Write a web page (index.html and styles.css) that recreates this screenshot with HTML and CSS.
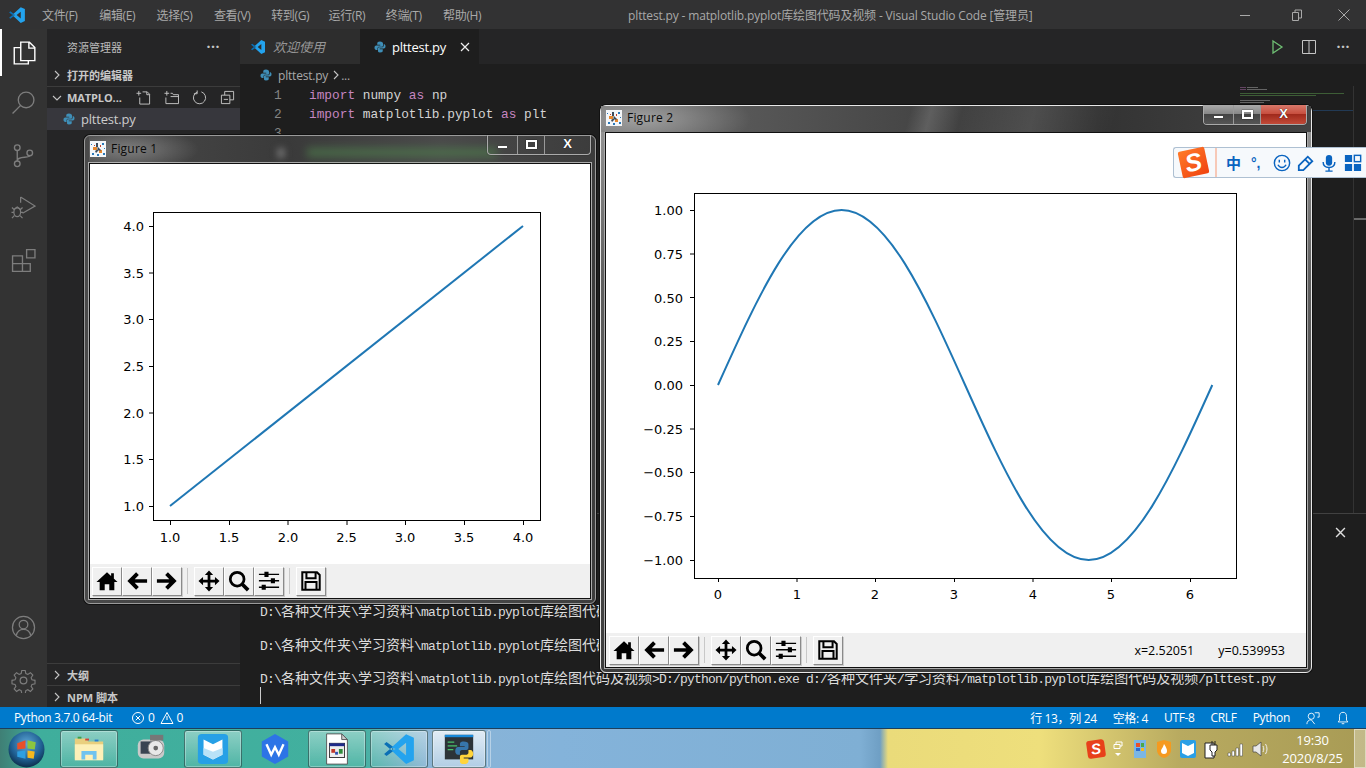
FILE: index.html
```html
<!DOCTYPE html>
<html lang="zh-CN">
<head>
<meta charset="utf-8">
<title>plttest.py - matplotlib.pyplot库绘图代码及视频 - Visual Studio Code [管理员]</title>
<link rel="stylesheet" href="styles.css">
</head>
<body>
<svg class="defs" width="0" height="0" aria-hidden="true">
  <defs>
    <radialGradient id="orb-g" cx="50%" cy="35%" r="65%"><stop offset="0" stop-color="#5fa8d8"/><stop offset=".65" stop-color="#1f5f92"/><stop offset="1" stop-color="#0c2f4c"/></radialGradient>
  </defs>
  <symbol id="py" viewBox="0 0 24 24">
    <path fill="#3f8fb8" d="M12 1C7 1 6.500 3 6.500 5v2.500H12.500V9H4.500C2 9 1 11 1 13.500S2.500 18 4.500 18H7v-3c0-2.500 1.500-3.500 3.500-3.500h5c1.500 0 2.500-1 2.500-2.500V5c0-2-2-4-6-4z"/>
    <path fill="#3f8fb8" d="M12 23c5 0 5.500-2 5.500-4v-2.500H11.500V15h8c2.500 0 3.500-2 3.500-4.500S21.500 6 19.500 6v3c0 2.500-1.500 3.500-3.500 3.500h-5.500C9 12.500 8 13.500 8 15v4c0 2 0 4 4 4z"/>
  </symbol>
  <symbol id="vsc" viewBox="0 0 24 24">
    <path fill="#0a6fb5" d="M1.500 8.500 3.200 7 8.500 11l-1.800 1.800zM1.500 15.500 3.200 17l5.300-4-1.800-1.800z"/>
    <path fill="#23a3ee" d="M17 1.500 22.500 4v16L17 22.500 6.700 13l3-1-3-1zM17 7.500 11.500 12l5.500 4.500z" fill-rule="evenodd"/>
  </symbol>
  <symbol id="mpl" viewBox="0 0 16 16">
    <rect width="16" height="16" fill="#f4f6f8"/>
    <path fill="#e5862c" d="M3 6h4v3H3zM9 9h3v3H9z"/>
    <path fill="#3a4a5a" d="M6 2h2v4H6zM8 6l3 3-1 1-3-3zM5 10l3-2 1 1-3 3z"/>
    <path fill="#2a78b8" d="M12 2h2v2h-2zM2 12h2v2H2zM7 13h2v2H7zM13 12h2v2h-2zM1 3h1v1H1zM14 7h1v1h-1z"/>
    <path fill="#c8402a" d="M10 4h1v2h-1zM4 4h1v1H4z"/>
  </symbol>
  <symbol id="t-home" viewBox="0 0 24 24"><path d="M12 2.500 23.500 13H20v9h-5.500v-6.500h-5V22H4v-9H.5zM16.500 3.500h3v6l-3-2.800z"/></symbol>
  <symbol id="t-back" viewBox="0 0 24 24"><path d="M1.500 12 11 2.500l3 3L9.500 10H23v4H9.500l4.500 4.500-3 3z"/></symbol>
  <symbol id="t-fwd" viewBox="0 0 24 24"><path d="M22.500 12 13 2.500l-3 3 4.500 4.500H1v4h13.500L10 18.500l3 3z"/></symbol>
  <symbol id="t-move" viewBox="0 0 24 24"><path d="M12 .5l4.500 5h-3v5h5v-3l5 4.500-5 4.500v-3h-5v5h3L12 23.500l-4.500-5h3v-5h-5v3L.5 12l5-4.500v3h5v-5h-3z"/></symbol>
  <symbol id="t-zoom" viewBox="0 0 24 24"><circle cx="10" cy="10" r="7.500" fill="none" stroke="#000" stroke-width="3"/><path d="M15 15l7 7" stroke="#000" stroke-width="4"/></symbol>
  <symbol id="t-conf" viewBox="0 0 24 24"><path d="M1 4h22v1.500H1zM1 11h22v1.500H1zM1 18h22v1.500H1z"/><path d="M7 2h4.500v5.500H7zM14 9h4.500v5.500H14zM4 16h4.500v5.500H4z"/></symbol>
  <symbol id="t-save" viewBox="0 0 24 24"><path fill="none" stroke="#000" stroke-width="2.200" d="M2.500 2.500h16l3 3v16h-19zM7 2.500v6.500h10V2.500M6 21.500v-8.500h12v8.500"/></symbol>
</svg>

<div class="desktop">
  <div class="vscode">
    <header class="titlebar">
      <svg class="tb-logo"><use href="#vsc"/></svg>
      <nav class="menu">
        <span>文件(F)</span><span>编辑(E)</span><span>选择(S)</span><span>查看(V)</span><span>转到(G)</span><span>运行(R)</span><span>终端(T)</span><span>帮助(H)</span>
      </nav>
      <div class="wintitle">plttest.py - matplotlib.pyplot库绘图代码及视频 - Visual Studio Code [管理员]</div>
      <div class="winbtns">
        <svg viewBox="0 0 14 14"><path d="M2 7.500h10"/></svg>
        <svg viewBox="0 0 14 14"><path d="M2.500 4.500h6v8h-6zM5 4.500V2h6.500v8h-3"/></svg>
        <svg viewBox="0 0 14 14"><path d="M1.500 1.500l11 11M12.500 1.500l-11 11"/></svg>
      </div>
    </header>

    <div class="workbench">
      <aside class="activity">
        <div class="act-item act-on"><svg viewBox="0 0 24 24" class="white"><path d="M9 2h8l5 5v12H9zM16.500 2v5.500H22M9 7H3v15h13v-3"/></svg></div>
        <div class="act-item"><svg viewBox="0 0 24 24"><circle cx="14.500" cy="9.500" r="7.500"/><path d="M9 15l-7.500 7.500"/></svg></div>
        <div class="act-item"><svg viewBox="0 0 24 24"><circle cx="6" cy="4.500" r="2.700"/><circle cx="6" cy="20" r="2.700"/><circle cx="18" cy="9.500" r="2.700"/><path d="M6 7.200v10M6 17c0-5 12-2 12-5"/></svg></div>
        <div class="act-item"><svg viewBox="0 0 26 26"><path d="M10 2l15 9.500L12 19M10 2v6"/><ellipse cx="6.500" cy="18" rx="3.500" ry="4.500"/><path d="M3.500 14.500l3-2 3 2M1 13l2.500 2.500M12 13l-2.500 2.500M.5 18H3M10 18h2.500M1 24l2.500-2.500M12 24l-2.500-2.500"/></svg></div>
        <div class="act-item"><svg viewBox="0 0 24 24"><path d="M1.500 7.500h9.500v15H1.500zM1.500 15h17v7.500H11M11 7.500V15M15 1.500h8v8h-8z"/></svg></div>
        <div class="act-spacer"></div>
        <div class="act-item"><svg viewBox="0 0 26 26"><circle cx="13" cy="13" r="11.500"/><circle cx="13" cy="10" r="4.500"/><path d="M5.500 21.500c1-5 4-6.500 7.500-6.500s6.500 1.500 7.500 6.500"/></svg></div>
        <div class="act-item act-gear"><svg viewBox="0 0 26 26"><circle cx="13" cy="13" r="3.500"/><path d="M11 1.500h4l.7 3.500 2.300 1 3-2 2.800 2.800-2 3 1 2.300 3.500.7v4l-3.500.7-1 2.300 2 3-2.800 2.800-3-2-2.300 1-.7 3.500h-4l-.7-3.500-2.300-1-3 2-2.800-2.800 2-3-1-2.300-3.500-.7v-4l3.500-.7 1-2.300-2-3L5 4l3 2 2.300-1z" transform="translate(1.300 1.300) scale(.9)"/></svg></div>
      </aside>

      <aside class="sidebar">
        <div class="side-head"><span>资源管理器</span><span class="dots">···</span></div>
        <div class="side-row side-bold"><svg class="chev" viewBox="0 0 10 10"><path d="M3 1l4 4-4 4"/></svg>打开的编辑器</div>
        <div class="side-row side-bold side-line">
          <svg class="chev" viewBox="0 0 10 10"><path d="M1 3l4 4 4-4"/></svg>
          <span class="proj">MATPLO...</span>
          <span class="proj-tools">
            <svg viewBox="0 0 16 16"><path d="M3 1v5M.5 3.500h5M7 2h5l2.500 2.500V15H4V8M11.500 2v3h3"/></svg>
            <svg viewBox="0 0 16 16"><path d="M3 1v5M.5 3.500h5M7 3.500h2L10 5h5.500v9.500H2V8M7 7h8.500"/></svg>
            <svg viewBox="0 0 16 16"><path d="M5.500 2.200A6.500 6.500 0 1 0 10 2M5.500 .5v3.500H2"/></svg>
            <svg viewBox="0 0 16 16"><path d="M1.500 5.500h9v9h-9zM5 5.500V1.500h9.500v9h-4M4 10h4.500"/></svg>
          </span>
        </div>
        <div class="side-file"><svg class="py-ico"><use href="#py"/></svg>plttest.py</div>
        <div class="side-spacer"></div>
        <div class="side-row side-bold side-line"><svg class="chev" viewBox="0 0 10 10"><path d="M3 1l4 4-4 4"/></svg>大纲</div>
        <div class="side-row side-bold side-line"><svg class="chev" viewBox="0 0 10 10"><path d="M3 1l4 4-4 4"/></svg>NPM 脚本</div>
      </aside>

      <main class="editor-area">
        <div class="tabs">
          <div class="tab tab-off"><svg class="tab-ico"><use href="#vsc"/></svg><em>欢迎使用</em></div>
          <div class="tab tab-on"><svg class="py-ico"><use href="#py"/></svg><span>plttest.py</span><svg class="tab-x" viewBox="0 0 10 10"><path d="M1 1l8 8M9 1l-8 8"/></svg></div>
          <div class="tab-actions">
            <svg viewBox="0 0 16 16" class="run"><path d="M4 2l9 6-9 6z"/></svg>
            <svg viewBox="0 0 16 16"><path d="M1.500 1.500h13v13h-13zM8 1.500v13"/></svg>
            <span class="dots dots-r">···</span>
          </div>
        </div>
        <div class="crumbs"><svg class="py-ico"><use href="#py"/></svg>plttest.py<svg class="chev" viewBox="0 0 10 10"><path d="M3 1l4 4-4 4"/></svg>...</div>
        <div class="editor">
          <div class="line"><span class="ln">1</span><code><i>import</i> numpy <i>as</i> np</code></div>
          <div class="line"><span class="ln">2</span><code><i>import</i> matplotlib.pyplot <i>as</i> plt</code></div>
          <div class="line"><span class="ln">3</span></div>
          <svg class="minimap" viewBox="0 0 104 20">
            <path class="mm-p" d="M0 1h6v1H0zM0 3h6v1H0z"/><path class="mm-w" d="M7 1h11v1H7zM7 3h20v1H7zM0 14h30v1H0zM0 16h24v1H0z"/>
            <path class="mm-g" d="M0 7h104v1H0zM0 9h76v1H0z"/>
          </svg>
          <div class="mini-line"></div>
          <div class="scroll-tick"></div>
        </div>
        <div class="panel">
          <svg class="panel-x" viewBox="0 0 10 10"><path d="M1 1l8 8M9 1l-8 8"/></svg>
          <div class="term">
            <div><b>D:\</b><s>各种文件夹</s><b>\</b><s>学习资料</s><b>\matplotlib.pyplot</b><s>库绘图代码及视频</s><b>&gt;</b></div>
            <div class="blank"></div>
            <div><b>D:\</b><s>各种文件夹</s><b>\</b><s>学习资料</s><b>\matplotlib.pyplot</b><s>库绘图代码及视频</s><b>&gt;</b></div>
            <div class="blank"></div>
            <div><b>D:\</b><s>各种文件夹</s><b>\</b><s>学习资料</s><b>\matplotlib.pyplot</b><s>库绘图代码及视频</s><b>&gt;D:/python/python.exe d:/</b><s>各种文件夹</s><b>/</b><s>学习资料</s><b>/matplotlib.pyplot</b><s>库绘图代码及视频</s><b>/plttest.py</b></div>
            <div class="blank"><span class="cursor"></span></div>
          </div>
        </div>
      </main>
    </div>

    <footer class="status">
      <span class="st-py">Python 3.7.0 64-bit</span>
      <span class="st-err">
        <svg viewBox="0 0 14 14"><circle cx="7" cy="7" r="5.500"/><path d="M4.800 4.800l4.400 4.400M9.200 4.800l-4.400 4.400"/></svg>0
        <svg viewBox="0 0 14 14"><path d="M7 1.500l6 11H1z"/><path d="M7 5v4"/></svg>0
      </span>
      <span class="st-right">
        <span>行 13，列 24</span><span>空格: 4</span><span>UTF-8</span><span>CRLF</span><span>Python</span>
        <svg viewBox="0 0 16 16"><circle cx="6" cy="6" r="3.500"/><path d="M1 15c0-3 2-5 5-5l4 5M10 2h5v5h-2"/></svg>
        <svg viewBox="0 0 16 16"><path d="M8 1.500c-3 0-4 2-4 5v4l-1.500 2h11L12 10.500v-4c0-3-1-5-4-5zM6.500 14.500h3"/></svg>
      </span>
    </footer>
  </div>

  <div class="taskbar">
    <div class="orb"><svg viewBox="0 0 36 36"><circle cx="18" cy="18" r="17.500" fill="url(#orb-g)"/><path fill="#e8502a" d="M9 12l8-3v8l-8 1z"/><path fill="#8cc63f" d="M19 9l8 2-1 7-7-1z"/><path fill="#2e9fe0" d="M9 20l8-1v8l-8-2z"/><path fill="#f5b81f" d="M19 19l7 1-1 7-6-1z"/></svg></div>
    <div class="task task-framed"><svg viewBox="0 0 36 36"><path fill="#e9cf7e" d="M3 7h12l2 3h16v19H3z"/><path fill="#fdf0b8" d="M3 13h30v17H3z"/><path fill="#6fc3ef" d="M10 29v-9h16v9h-4v-5h-8v5z"/><path fill="#3da04b" d="M6 5h4v2H6z"/><path fill="#d0443a" d="M14 7h4v2h-4z"/><path fill="#2c7fd0" d="M24 8h4v2h-4z"/></svg></div>
    <div class="task"><svg viewBox="0 0 36 36"><rect x="4" y="8" width="28" height="20" rx="6" fill="#c9c9c9"/><rect x="7" y="10" width="13" height="13" fill="#394452"/><circle cx="23" cy="17" r="8" fill="#e8e8e8" stroke="#888"/><circle cx="23" cy="17" r="2.500" fill="#666"/><rect x="17" y="3" width="14" height="6" fill="#777"/></svg></div>
    <div class="task task-framed"><svg viewBox="0 0 36 36"><rect x="2" y="2" width="32" height="32" rx="4" fill="#26a0e6"/><path fill="#fff" d="M8 8l10 5v16L8 24zM28 8l-10 5v16l10-5z"/><path fill="#b9e2f7" d="M8 17l10 4v8L8 24zM28 17l-10 4v8l10-5z"/></svg></div>
    <div class="task"><svg viewBox="0 0 36 36"><path fill="#2d74e6" d="M18 2l14 8v16l-14 8-14-8V10z"/><path fill="none" stroke="#fff" stroke-width="2.500" d="M9 13l5 11 4-8 4 8 5-11"/></svg></div>
    <div class="task task-framed"><svg viewBox="0 0 36 36"><path fill="#fff" stroke="#555" d="M7 2h16l6 6v26H7z"/><path fill="#ccc" stroke="#555" d="M23 2v6h6z"/><rect x="10" y="12" width="16" height="15" fill="#eee" stroke="#333"/><rect x="10" y="12" width="16" height="3" fill="#1e2a8a"/><path fill="#c0392b" d="M12 18h4v4h-4z"/><path fill="#2e8b3a" d="M20 18h4v5h-4z"/><path fill="#2f4fb0" d="M16 21h3v3h-3z"/></svg></div>
    <div class="task task-framed task-vsc"><svg><use href="#vsc"/></svg></div>
    <div class="task task-framed task-active"><svg viewBox="0 0 36 36"><rect x="3" y="3" width="30" height="26" fill="#2c3338"/><rect x="3" y="3" width="30" height="2.500" fill="#1788d8"/><path fill="#48c16a" d="M6 10h7v1.300H6zM6 14h10v1.300H6zM6 18h6v1.300H6z"/><path fill="#3776ab" d="M20 10c-4 0-4 2-4 3v2h5v1h-7c-2 0-3 2-3 4s1 4 3 4h2v-3c0-1 1-2 2-2h5c1 0 2-1 2-2v-4c0-2-2-3-5-3z" transform="translate(3 0)"/><path fill="#ffd43b" d="M23 34c4 0 5-2 5-3v-3h-5v-1h7c2 0 3-2 3-4s-1-4-3-4h-2v3c0 1-1 2-2 2h-5c-1 0-2 1-2 2v5c0 2 1 3 4 3z"/></svg></div>
    <div class="task-sliver"></div>
    <div class="task-space"></div>
    <div class="tray">
      <span class="tray-s">S</span>
      <svg class="tray-up" viewBox="0 0 14 20"><path fill="none" stroke="#fff" d="M3 5.500h6v4H3zM5 5.500V3h6v4H9"/><path fill="#fff" d="M4 14h6l-3 3z"/></svg>
      <svg viewBox="0 0 18 20"><rect x="3" y="1" width="12" height="18" fill="#7ab6e4"/><path fill="#e8502a" d="M5 4h4v4H5z"/><path fill="#4aa84a" d="M10 4h3v4h-3z"/><path fill="#f5b81f" d="M10 9h3v3h-3z"/><path fill="#2a6ad0" d="M5 9h4v3H5z"/></svg>
      <svg viewBox="0 0 18 20"><path fill="#f59a1f" d="M2 3l7-2 7 2v8c0 4-3 7-7 8-4-1-7-4-7-8z"/><path fill="#fff" d="M9 5c2 3 3 5 3 7 0 2-1 3-3 3s-3-1-3-3c0-2 2-3 3-7z"/></svg>
      <svg viewBox="0 0 18 20"><rect x="1" y="1" width="16" height="18" rx="2" fill="#2a9fe6"/><path fill="#fff" d="M3 4l6 3v10l-6-3zM15 4L9 7v10l6-3z"/></svg>
      <svg viewBox="0 0 18 20"><path fill="#fff" stroke="#222" d="M2 4h9v15H2z"/><path fill="#fff" stroke="#222" d="M7 6h7v5l-2 2v4h-3v-4l-2-2zM9 2v4M12 2v4"/></svg>
      <svg viewBox="0 0 18 20"><path fill="#fff" stroke="#444" stroke-width=".5" d="M1 14h2.500v3H1zM5 12h2.500v5H5zM9 9h2.500v8H9zM13 5h2.500v12H13z"/></svg>
      <svg viewBox="0 0 18 20"><path fill="#e8e8e8" stroke="#444" stroke-width=".7" d="M2 7h3l5-4v14l-5-4H2z"/><path fill="none" stroke="#eee" d="M12 7c1 2 1 4 0 6M14.500 5c2 3 2 7 0 10"/></svg>
      <div class="clock"><span>19:30</span><span>2020/8/25</span></div>
    </div>
    <div class="show-desktop"></div>
  </div>

  <section class="figure fig1">
    <div class="glass-blur"></div>
    <div class="glass-four"></div>
    <div class="fig-title"><svg class="fig-ico"><use href="#mpl"/></svg><span class="fig-name">Figure 1</span>
      <div class="aero-btns">
        <div class="ab ab-min"><i></i></div><div class="ab ab-max"><i></i></div><div class="ab ab-close">X</div>
      </div>
    </div>
    <div class="client">
      <svg class="plot" viewBox="90 164 500 400">
        <rect class="axes" x="153.500" y="212.500" width="387" height="308"/>
        <path class="tick" d="M170.500 521v4M229.500 521v4M288 521v4M347 521v4M405.500 521v4M464.500 521v4M523.500 521v4M153 506.500h-4M153 459.500h-4M153 413h-4M153 366.500h-4M153 319.500h-4M153 273h-4M153 226.500h-4"/>
        <path class="curve" d="M170 506L523 226"/>
        <g class="xl"><text x="170" y="542">1.0</text><text x="229" y="542">1.5</text><text x="288" y="542">2.0</text><text x="346.500" y="542">2.5</text><text x="405" y="542">3.0</text><text x="464" y="542">3.5</text><text x="523" y="542">4.0</text></g>
        <g class="yl"><text x="144" y="511">1.0</text><text x="144" y="464">1.5</text><text x="144" y="418">2.0</text><text x="144" y="371">2.5</text><text x="144" y="324">3.0</text><text x="144" y="278">3.5</text><text x="144" y="231">4.0</text></g>
      </svg>
      <div class="toolbar">
        <button class="tbtn"><svg><use href="#t-home"/></svg></button><button class="tbtn"><svg><use href="#t-back"/></svg></button><button class="tbtn"><svg><use href="#t-fwd"/></svg></button>
        <span class="sep"></span>
        <button class="tbtn"><svg><use href="#t-move"/></svg></button><button class="tbtn"><svg><use href="#t-zoom"/></svg></button><button class="tbtn"><svg><use href="#t-conf"/></svg></button>
        <span class="sep"></span>
        <button class="tbtn"><svg><use href="#t-save"/></svg></button>
      </div>
    </div>
  </section>

  <section class="figure fig2">
    <div class="fig-title"><svg class="fig-ico"><use href="#mpl"/></svg><span class="fig-name">Figure 2</span>
      <div class="aero-btns">
        <div class="ab ab-min"><i></i></div><div class="ab ab-max"><i></i></div><div class="ab ab-close">X</div>
      </div>
    </div>
    <div class="client">
      <svg class="plot" viewBox="606 133 700 500">
        <rect class="axes" x="694.500" y="193.500" width="542" height="385"/>
        <path class="tick" d="M718.500 578v4M797 578v4M875.500 578v4M954.500 578v4M1033 578v4M1111.500 578v4M1190.500 578v4M694 210.500h-4M694 254h-4M694 297.500h-4M694 341.500h-4M694 385.500h-4M694 429h-4M694 472.500h-4M694 516.500h-4M694 560.500h-4"/>
        <path class="curve" d="M718 385C758.300 295.400 796.900 210 841.600 210C886.200 210 924.900 295.400 965.100 385C1005.400 474.600 1044.100 560 1088.700 560C1133.300 560 1172 474.600 1212.300 385"/>
        <g class="xl"><text x="718" y="599">0</text><text x="797" y="599">1</text><text x="875" y="599">2</text><text x="954" y="599">3</text><text x="1033" y="599">4</text><text x="1111" y="599">5</text><text x="1190" y="599">6</text></g>
        <g class="yl"><text x="683" y="215">1.00</text><text x="683" y="259">0.75</text><text x="683" y="303">0.50</text><text x="683" y="346">0.25</text><text x="683" y="390">0.00</text><text x="683" y="434">−0.25</text><text x="683" y="477">−0.50</text><text x="683" y="521">−0.75</text><text x="683" y="565">−1.00</text></g>
      </svg>
      <div class="toolbar">
        <button class="tbtn"><svg><use href="#t-home"/></svg></button><button class="tbtn"><svg><use href="#t-back"/></svg></button><button class="tbtn"><svg><use href="#t-fwd"/></svg></button>
        <span class="sep"></span>
        <button class="tbtn"><svg><use href="#t-move"/></svg></button><button class="tbtn"><svg><use href="#t-zoom"/></svg></button><button class="tbtn"><svg><use href="#t-conf"/></svg></button>
        <span class="sep"></span>
        <button class="tbtn"><svg><use href="#t-save"/></svg></button>
        <span class="coords"><span>x=2.52051</span><span>y=0.539953</span></span>
      </div>
    </div>
  </section>

  <div class="sogou">
    <div class="sg-logo"><span>S</span></div>
    <div class="sg-div"></div>
    <span class="sg-zh">中</span>
    <span class="sg-punct">°,</span>
    <svg viewBox="0 0 20 20"><circle cx="10" cy="10" r="8.500"/><path d="M7 6.500v3M13 6.500v3M5.500 12c2 4 7 4 9 0"/></svg>
    <svg viewBox="0 0 20 20"><path d="M2 13L12 3l5 5-10 10H2zM9 6l5 5" class="sg-pen"/></svg>
    <svg viewBox="0 0 20 20"><rect x="6.500" y="1" width="7" height="12" rx="3.500" class="sg-fill"/><path d="M3.500 9c0 4 3 6 6.500 6s6.500-2 6.500-6M10 15v4M6 19h8"/></svg>
    <svg viewBox="0 0 20 20"><path class="sg-fill" d="M1 1h8v8H1zM1 11h8v8H1zM11 11h8v8h-8z"/><rect x="11.500" y="1.500" width="7" height="7"/></svg>
  </div>
</div>
</body>
</html>
```
FILE: styles.css
```css
* { box-sizing: border-box; }
html, body { margin: 0; height: 100%; overflow: hidden; background: #000; }
body { font: 12px "Open Sans", "Noto Sans CJK SC", sans-serif; color: #ccc; }
.defs { position: absolute; }
svg { display: block; }

.desktop { position: relative; width: 1366px; height: 768px; display: flex; flex-direction: column; overflow: hidden; }
.vscode { height: 728px; display: flex; flex-direction: column; }

/* title bar */
.titlebar { height: 29px; background: #323233; display: flex; align-items: center; position: relative; color: #a9a9a9; flex: none; }
.tb-logo { width: 18px; height: 18px; margin: 0 16px 0 8px; }
.menu { display: flex; gap: 15.300px; }
.menu span { width: 42px; white-space: nowrap; letter-spacing: -.35px; }
.wintitle { margin-left: 143px; white-space: nowrap; letter-spacing: -.16px; }
.winbtns { margin-left: auto; display: flex; gap: 33px; padding-right: 15px; }
.winbtns svg { width: 14px; height: 14px; fill: none; stroke: #a9a9a9; }
.winbtns svg:first-child { margin-right: 5px; }

.workbench { flex: 1; display: flex; min-height: 0; }

/* activity bar */
.activity { width: 47px; background: #333; display: flex; flex-direction: column; flex: none; }
.act-item { height: 52.700px; display: flex; align-items: center; justify-content: center; flex: none; }
.act-item svg { width: 25px; height: 25px; fill: none; stroke: #7d7d7d; stroke-width: 1.300; }
.act-item svg.white { stroke: #fff; width: 26px; height: 26px; }
.act-on { height: 47px; border-left: 2px solid #fff; padding-right: 2px; }
.act-spacer { flex: 1; }

/* sidebar */
.sidebar { width: 193px; background: #252526; display: flex; flex-direction: column; flex: none; }
.side-head { height: 35px; display: flex; justify-content: space-between; align-items: center; padding: 0 20px; color: #bbb; font-size: 11px; flex: none; }
.dots { font-size: 14px; font-weight: 700; letter-spacing: .5px; color: #c5c5c5; }
.side-row { height: 22px; display: flex; align-items: center; color: #c8c8c8; font-size: 11px; flex: none; }
.side-bold { font-weight: 700; }
.side-line { border-top: 1px solid #3c3c3c; }
.chev { width: 10px; height: 10px; margin: 0 5px 0 5px; fill: none; stroke: #c5c5c5; stroke-width: 1.100; flex: none; }
.proj { width: 63px; white-space: nowrap; letter-spacing: -.1px; }
.proj-tools { display: flex; gap: 13px; margin-left: 6px; }
.proj-tools svg { width: 15px; height: 15px; fill: none; stroke: #c5c5c5; }
.side-file { height: 22px; background: #37373d; display: flex; align-items: center; padding-left: 16px; font-size: 13px; color: #ccc; letter-spacing: -.2px; flex: none; }
.py-ico { width: 12px; height: 12px; margin-right: 6px; flex: none; }
.side-spacer { flex: 1; }

/* editor */
.editor-area { flex: 1; display: flex; flex-direction: column; min-width: 0; background: #1e1e1e; }
.tabs { height: 35px; background: #252526; display: flex; flex: none; }
.tab { display: flex; align-items: center; font-size: 13px; flex: none; }
.tab-off { width: 120px; background: #2d2d2d; padding-left: 10px; color: #969696; }
.tab-ico { width: 16px; height: 16px; margin-right: 7px; }
.tab-on { width: 119px; background: #1e1e1e; padding-left: 14px; color: #fff; letter-spacing: -.25px; }
.tab-x { width: 10px; height: 10px; margin-left: 14px; fill: none; stroke: #eee; stroke-width: 1.200; }
.tab-actions { margin-left: auto; display: flex; align-items: center; gap: 16px; padding-right: 16px; }
.tab-actions svg { width: 16px; height: 16px; fill: none; stroke: #c5c5c5; }
.tab-actions svg.run { stroke: #6fbf73; stroke-width: 1.300; }
.dots-r { margin-left: 4px; }
.crumbs { height: 22px; display: flex; align-items: center; padding-left: 20px; color: #a9a9a9; letter-spacing: -.2px; flex: none; }
.crumbs .chev { margin: 0 0 0 3px; }
.editor { flex: 1; position: relative; min-height: 0; }
.line { height: 19px; display: flex; align-items: center; font: 12.800px/19px "Liberation Mono", "Noto Sans CJK SC", monospace; }
.ln { width: 69px; padding-left: 34px; color: #858585; }
.line code { font: inherit; color: #d4d4d4; }
.line i { font-style: normal; color: #c586c0; }
.minimap { position: absolute; left: 1000px; top: 0; width: 104px; height: 20px; opacity: .65; }
.mm-p { fill: #8a5a88; } .mm-w { fill: #8a8a8a; } .mm-g { fill: #4f7f43; }
.mini-line { position: absolute; left: 1000px; right: 12px; top: 24px; height: 1px; background: #223a55; }
.editor::after { content: ""; position: absolute; top: 0; bottom: 0; right: 12px; width: 1px; background: #333; }
.scroll-tick { position: absolute; right: 0; top: 132px; width: 12px; height: 2px; background: #6a6a6a; }

/* panel */
.panel { height: 194px; border-top: 1px solid #414141; position: relative; display: flex; flex-direction: column; justify-content: flex-end; flex: none; }
.panel-x { position: absolute; right: 20px; top: 13px; width: 11px; height: 11px; fill: none; stroke: #ddd; stroke-width: 1.300; }
.term { padding: 0 0 3px 20px; font: 400 13px/16.800px "Liberation Mono", monospace; color: #dcdcdc; white-space: nowrap; }
.term > div { height: 16.800px; }
.term b { font-weight: 400; letter-spacing: -.8px; }
.term s { text-decoration: none; font: 400 14px/16.800px "Noto Sans CJK SC", sans-serif; }
.cursor { display: block; width: 1px; height: 17px; margin-top: 1px; background: #ccc; }

/* status bar */
.status { height: 21px; background: #007acc; display: flex; align-items: center; padding: 0 16px 0 14px; color: #fff; flex: none; white-space: nowrap; letter-spacing: -.35px; }
.status svg { width: 14px; height: 14px; fill: none; stroke: #fff; }
.st-py { width: 117px; }
.st-err { display: flex; align-items: center; gap: 3px; }
.st-err svg + svg { margin-left: 2px; }
.st-right { margin-left: auto; display: flex; align-items: center; gap: 16px; }

/* taskbar */
.taskbar { height: 40px; flex: none; display: flex; align-items: stretch; padding: 1px 0 0 8px; border-top: 1px solid #1d3f5c; background: linear-gradient(90deg, #3f7f75 0, #3fae9c 40px, #42b09f 360px, #8ab4d6 430px, #84b3da 560px, #7fafd4 860px, #6f9fc4 880px, #eadb7a 888px, #eedf7c 1040px, #b8aa60 1180px, #a89b55 1366px); }
.orb { width: 38px; margin-right: 14px; display: flex; align-items: center; }
.orb svg { width: 37px; height: 37px; }
.task { width: 58px; margin-right: 4px; flex: none; display: flex; align-items: center; justify-content: center; }
.task svg { width: 34px; height: 34px; }
.task-framed { border: 1px solid rgba(30, 60, 60, .6); border-radius: 3px; box-shadow: inset 0 0 0 1px rgba(255, 255, 255, .3); background: linear-gradient(180deg, rgba(255, 255, 255, .4), rgba(255, 255, 255, .08)); }
.task-active { width: 54px; background: linear-gradient(180deg, rgba(255, 255, 255, .75), rgba(255, 255, 255, .35)); }
.task-sliver { width: 4px; margin-left: -3px; border: 1px solid rgba(255, 255, 255, .4); border-radius: 2px; }
.task-space { flex: 1; }
.tray { display: flex; align-items: center; gap: 6px; padding-right: 5px; }
.tray > svg { width: 18px; height: 20px; }
.tray .tray-up { width: 14px; }
.tray-s { width: 18px; height: 18px; background: #e8401a; color: #fff; border-radius: 3px; font: italic 700 15px/18px "Liberation Sans", sans-serif; text-align: center; transform: rotate(-8deg); }
.clock { width: 73px; margin-left: 1px; display: flex; flex-direction: column; align-items: center; color: #fff; font-size: 13px; line-height: 18px; letter-spacing: -.1px; }
.show-desktop { width: 12px; background: rgba(255, 255, 255, .3); border: 1px solid rgba(255, 255, 255, .45); flex: none; margin-top: -1px; }

/* figure windows */
.figure { position: absolute; display: flex; flex-direction: column; padding: 0 4px 4px; border-radius: 6px; box-shadow: 0 0 0 1px #111; }
.fig1 { left: 84px; top: 135px; width: 512px; height: 469px; border: 1px solid #9a9a9a; background: linear-gradient(90deg, #4a4a4a, #3a3a3a 40%, #4a4a4a 70%, #3c3c3c); }
.fig2 { left: 600px; top: 105px; width: 712px; height: 568px; border: 1px solid #e8e8e8; background: linear-gradient(180deg, #9a9a9a 0, #606060 30%, #3c3c3c 100%); }
.fig-title { height: 27px; display: flex; align-items: center; position: relative; flex: none; padding-bottom: 2px; background: radial-gradient(ellipse 70px 22px at 40px 50%, rgba(255, 255, 255, .3), transparent); }
.fig2 .fig-title { height: 26px; padding-bottom: 3px; margin: 0 -4px; padding-left: 4px; padding-right: 4px; background: radial-gradient(ellipse 110px 34px at 40px 50%, rgba(255, 255, 255, .4), transparent), linear-gradient(105deg, transparent 300px, rgba(255, 255, 255, .14) 320px, transparent 350px, rgba(255, 255, 255, .1) 420px, transparent 500px), linear-gradient(90deg, #666, #333 70%, #444); }
.fig-ico { width: 16px; height: 16px; margin-left: 1px; flex: none; }
.fig-name { color: #0a0a0a; margin-left: 5px; font-size: 12px; letter-spacing: .2px; }
.glass-blur { position: absolute; left: 222px; top: 12px; width: 190px; height: 9px; background: #4e7c4c; filter: blur(4px); opacity: .7; }
.glass-four { position: absolute; left: 192px; top: 12px; width: 8px; height: 10px; background: #6a6a6a; filter: blur(3px); }
.aero-btns { position: absolute; top: -1px; right: 0; height: 20px; display: flex; border: 1px solid #aaa; border-top: 0; border-radius: 0 0 4px 4px; overflow: hidden; box-shadow: 0 0 1px #000; }
.fig2 .aero-btns { right: 4px; }
.ab { height: 100%; display: flex; align-items: center; justify-content: center; color: #fff; font: 700 13px/1 "Liberation Sans", sans-serif; border-left: 1px solid #999; text-shadow: 0 0 1px #000; }
.ab:first-child { border-left: 0; }
.ab-min { width: 29px; } .ab-max { width: 27px; } .ab-close { width: 46px; padding-bottom: 3px; }
.ab-min i { display: block; width: 11px; height: 4px; background: #fff; margin-top: 5px; border: 1px solid #444; }
.ab-max i { display: block; width: 11px; height: 9px; border: 2px solid #fff; box-shadow: 0 0 1px #000; }
.fig2 .ab-min, .fig2 .ab-max { background: linear-gradient(180deg, #aaa 0, #888 45%, #444 50%, #555 100%); }
.fig2 .ab-close { background: linear-gradient(180deg, #d8786a 0, #c85040 45%, #a02a1c 50%, #c24a38 100%); }
.client { flex: 1; display: flex; flex-direction: column; border: 1px solid #101010; background: #fff; min-height: 0; outline: 1px solid #aaa; }
.plot { flex: 1; min-height: 0; width: 100%; }
.axes { fill: #fff; stroke: #000; stroke-width: 1; }
.tick { stroke: #000; stroke-width: 1; fill: none; }
.curve { fill: none; stroke: #1f77b4; stroke-width: 2; }
.xl text, .yl text { font: 13px "DejaVu Sans", sans-serif; fill: #000; }
.xl text { text-anchor: middle; }
.yl text { text-anchor: end; }
.toolbar { height: 34px; background: #f0f0f0; display: flex; align-items: center; padding-left: 2px; flex: none; }
.fig2 .toolbar { padding-left: 3px; }
.tbtn { width: 30px; height: 29px; padding: 0; background: #f0f0f0; border: 1px solid; border-color: #fff #8a8a8a #8a8a8a #fff; display: flex; align-items: center; justify-content: center; box-shadow: 1px 1px 0 #ccc; }
.tbtn svg { width: 22px; height: 22px; }
.sep { width: 1px; height: 26px; background: #c8c8c8; margin: 0 6px 0 5px; }
.coords { margin-left: auto; padding-right: 21px; display: flex; gap: 24px; color: #000; font-size: 12.500px; white-space: nowrap; }

/* sogou */
.sogou { position: absolute; left: 1173px; top: 147px; width: 193px; height: 31px; background: #f6f9fc; border: 1px solid #aec0d2; border-right: 0; border-radius: 3px 0 0 3px; display: flex; align-items: center; padding-left: 6px; color: #0a64c0; }
.sogou svg { width: 18px; height: 18px; margin-left: 5.500px; fill: none; stroke: #0a64c0; stroke-width: 1.600; flex: none; }
.sg-logo { width: 27px; height: 27px; background: linear-gradient(150deg, #ff7a2a, #f0430f); transform: rotate(-12deg); border-radius: 2px; display: flex; align-items: center; justify-content: center; color: #fff; font: italic 700 25px/1 "Liberation Sans", sans-serif; flex: none; }
.sg-div { width: 2px; height: 29px; background: #f7c9b8; margin: 0 9px 0 8px; flex: none; }
.sg-zh { font: 700 15px/1 "Noto Sans CJK SC", sans-serif; }
.sg-punct { font: 700 14px/1 "Liberation Sans", sans-serif; margin-left: 10px; width: 13px; }
.sogou .sg-punct + svg { margin-left: 9px; }
.sg-fill { fill: #0a64c0; stroke: none; }
.sg-pen { stroke-width: 2; }
```
